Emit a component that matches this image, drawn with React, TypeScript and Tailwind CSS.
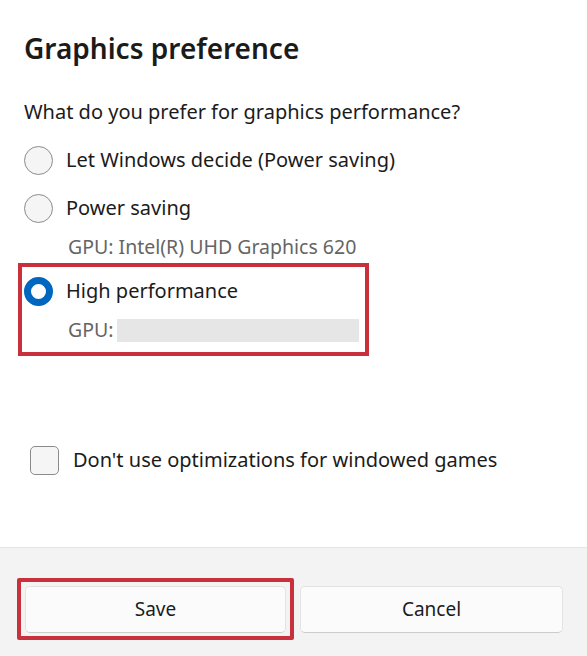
import React from 'react';

const font = { fontFamily: '"Noto Sans", "Open Sans", sans-serif' };

const Radio = ({ checked = false }: { checked?: boolean }) =>
    checked ? (
        <span className="w-[29px] h-[29px] rounded-full border-[7px] border-[#0067c0] bg-white shrink-0" />
    ) : (
        <span className="w-[29px] h-[29px] rounded-full border border-[#8b8b8b] bg-[#f5f5f5] shrink-0" />
    );

export default function App() {
    return (
        <div className="w-[587px] h-[656px] bg-white flex flex-col text-[#1b1b1b] overflow-hidden" style={font}>
            <div className="flex-1 relative pl-6">
                <h1 className="text-[28px] font-semibold leading-none pt-[34px] h-[100px]">Graphics preference</h1>

                <p className="text-[20px] leading-[26px] -mt-[1px]">What do you prefer for graphics performance?</p>

                <div className="mt-[11px] flex flex-col">
                    <label className="h-12 flex items-center gap-[13px]">
                        <Radio />
                        <span className="text-[20px]">Let Windows decide (Power saving)</span>
                    </label>
                    <label className="h-12 flex items-center gap-[13px]">
                        <Radio />
                        <span className="text-[20px]">Power saving</span>
                    </label>
                    <div className="h-[30px] flex items-center pl-[44px] text-[19.5px] text-[#656565]">GPU: Intel(R) UHD Graphics 620</div>
                    <label className="mt-[5px] h-12 flex items-center gap-[13px]">
                        <Radio checked />
                        <span className="text-[20px]">High performance</span>
                    </label>
                    <div className="h-[30px] flex items-center pl-[44px] text-[19.5px] text-[#656565]">
                        GPU:
                        <span className="ml-[4px] w-[242px] h-[23px] bg-[#e6e6e6]" />
                    </div>
                </div>

                {/* annotation box */}
                <div className="absolute left-[18px] top-[263px] w-[351px] h-[93px] border-4 border-[#c8303b] pointer-events-none" />

                <label className="mt-[100px] ml-[6px] flex items-center gap-[14px]">
                    <span className="w-[29px] h-[29px] rounded-[5px] border border-[#8b8b8b] bg-[#f5f5f5] shrink-0" />
                    <span className="text-[20px]">Don't use optimizations for windowed games</span>
                </label>
            </div>

            <div className="h-[109px] bg-[#f3f3f3] border-t border-[#e5e5e5] pl-[25px] pr-6 pt-[38px] flex gap-[14px] items-start">
                <div className="relative flex-1">
                    <button className="w-full h-[47px] rounded-[5px] bg-[#fbfbfb] border border-[#e3e3e3] border-b-[#cccccc] text-[19px]">Save</button>
                    <div className="absolute -left-2 -top-2 -right-2 -bottom-[7px] border-4 border-[#c8303b] rounded-[2px] pointer-events-none" />
                </div>
                <button className="flex-1 h-[47px] rounded-[5px] bg-[#fbfbfb] border border-[#e3e3e3] border-b-[#cccccc] text-[19px]">Cancel</button>
            </div>
        </div>
    );
}
